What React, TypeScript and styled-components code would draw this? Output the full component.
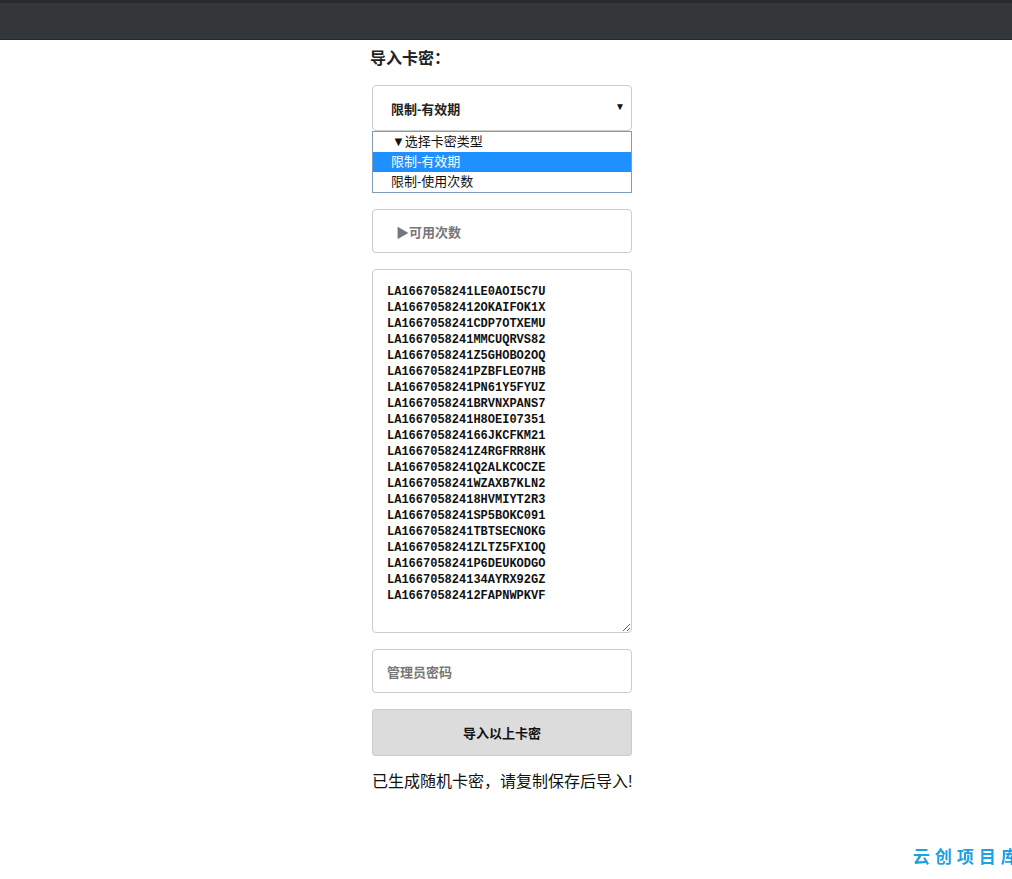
import React from "react";
import styled, { createGlobalStyle } from "styled-components";

const Global = createGlobalStyle`
  html, body { margin: 0; padding: 0; background: #fff; }
  body { font-family: "Liberation Sans", "Noto Sans CJK SC", sans-serif; color: #111; }
`;

const TopBar = styled.header`
  height: 40px;
  box-sizing: border-box;
  background: #33373a;
  border-top: 3px solid #272b2e;
  border-bottom: 1px solid #25292c;
`;

const Main = styled.main`
  width: 260px;
  margin: 0 auto;
  padding: 7px 8px 0 0;
  display: flex;
  flex-direction: column;
`;

const Title = styled.h3`
  margin: 0 0 14px -2px;
  height: 24px;
  line-height: 24px;
  font-size: 16px;
  font-weight: bold;
  color: #222;
`;

const SelectWrap = styled.div`
  position: relative;
  margin-bottom: 78px;
`;

const Box = styled.div<{ $h: number; $muted?: boolean; $indent?: number }>`
  box-sizing: border-box;
  height: ${(p) => p.$h}px;
  border: 1px solid #ccc;
  border-radius: 4px;
  background: #fff;
  display: flex;
  align-items: center;
  padding-left: ${(p) => p.$indent ?? 14}px;
  font-size: 13px;
  font-weight: bold;
  color: ${(p) => (p.$muted ? "#777" : "#222")};
`;

const SelectBox = styled(Box)`
  justify-content: space-between;
  padding-right: 6px;
`;

const Arrow = styled.span`
  font-size: 10px;
  color: #111;
  margin-top: -4px;
`;

const OptionList = styled.ul`
  position: absolute;
  left: 0;
  right: 0;
  top: 46px;
  margin: 0;
  padding: 0;
  list-style: none;
  border: 1px solid #7f9db9;
  background: #fff;
  box-sizing: border-box;
`;

const Option = styled.li<{ $active?: boolean; $indent?: number }>`
  height: 20px;
  line-height: 20px;
  font-size: 13px;
  padding-left: ${(p) => p.$indent ?? 18}px;
  background: ${(p) => (p.$active ? "#1e90ff" : "#fff")};
  color: ${(p) => (p.$active ? "#fff" : "#111")};
`;

const Field = styled.div`
  margin-bottom: 16px;
`;

const CodeArea = styled.textarea`
  display: block;
  box-sizing: border-box;
  width: 260px;
  height: 364px;
  margin: 0;
  border: 1px solid #ccc;
  border-radius: 4px;
  padding: 14px 14px;
  font-family: "Liberation Mono", "DejaVu Sans Mono", monospace;
  font-weight: bold;
  font-size: 12px;
  line-height: 16px;
  color: #111;
  resize: vertical;
  outline: none;
  overflow: hidden;
`;

const Button = styled.button`
  box-sizing: border-box;
  width: 260px;
  height: 47px;
  border: 1px solid #ccc;
  border-radius: 3px;
  background: #dcdcdc;
  font-family: "Liberation Sans", "Noto Sans CJK SC", sans-serif;
  font-size: 13px;
  font-weight: bold;
  color: #111;
  margin-bottom: 16px;
`;

const Note = styled.p`
  margin: 0;
  font-size: 16px;
  line-height: 20px;
  color: #111;
  white-space: nowrap;
`;

const Watermark = styled.div`
  position: fixed;
  left: 913px;
  top: 843px;
  font-family: "Noto Sans CJK SC", sans-serif;
  font-weight: bold;
  font-size: 17px;
  letter-spacing: 5px;
  color: #1ca0e6;
  white-space: nowrap;
`;

const codes = [
  "LA1667058241LE0AOI5C7U",
  "LA16670582412OKAIFOK1X",
  "LA1667058241CDP7OTXEMU",
  "LA1667058241MMCUQRVS82",
  "LA1667058241Z5GHOBO2OQ",
  "LA1667058241PZBFLEO7HB",
  "LA1667058241PN61Y5FYUZ",
  "LA1667058241BRVNXPANS7",
  "LA1667058241H8OEI07351",
  "LA166705824166JKCFKM21",
  "LA1667058241Z4RGFRR8HK",
  "LA1667058241Q2ALKCOCZE",
  "LA1667058241WZAXB7KLN2",
  "LA16670582418HVMIYT2R3",
  "LA1667058241SP5BOKC091",
  "LA1667058241TBTSECNOKG",
  "LA1667058241ZLTZ5FXIOQ",
  "LA1667058241P6DEUKODGO",
  "LA166705824134AYRX92GZ",
  "LA16670582412FAPNWPKVF",
];

export default function App() {
  return (
    <>
      <Global />
      <TopBar />
      <Main>
        <Title>导入卡密：</Title>
        <SelectWrap>
          <SelectBox $h={46} $indent={18}>
            <span>限制-有效期</span>
            <Arrow>▼</Arrow>
          </SelectBox>
          <OptionList>
            <Option $indent={19}>▼选择卡密类型</Option>
            <Option $active>限制-有效期</Option>
            <Option>限制-使用次数</Option>
          </OptionList>
        </SelectWrap>
        <Field>
          <Box $h={44} $muted $indent={23}>▶可用次数</Box>
        </Field>
        <Field>
          <CodeArea defaultValue={codes.join("\n")} spellCheck={false} />
        </Field>
        <Field>
          <Box $h={44} $muted>管理员密码</Box>
        </Field>
        <Button>导入以上卡密</Button>
        <Note>已生成随机卡密，请复制保存后导入!</Note>
      </Main>
      <Watermark>云创项目库</Watermark>
    </>
  );
}
